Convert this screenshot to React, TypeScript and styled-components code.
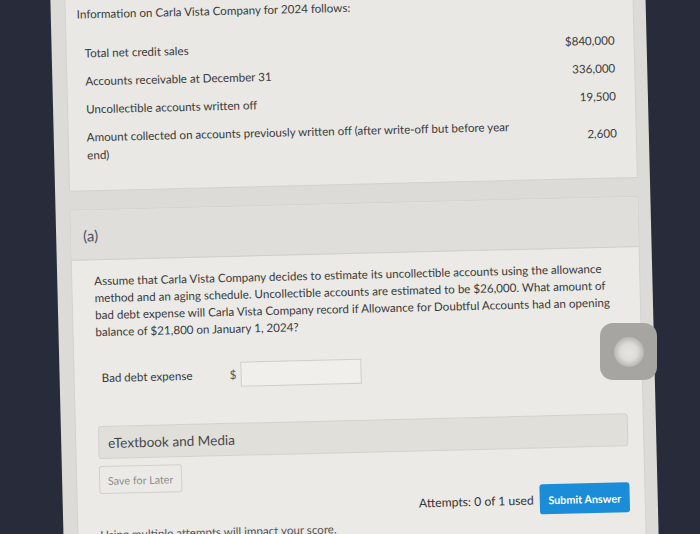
import React from "react";
import styled, { createGlobalStyle } from "styled-components";

const GlobalStyle = createGlobalStyle`
  html, body {
    margin: 0;
    padding: 0;
    background: #282b39;
    overflow: hidden;
  }
  body {
    font-family: Lato, "Open Sans", "Liberation Sans", sans-serif;
    color: #3a3a3a;
  }
`;

const Viewport = styled.div`
  width: 700px;
  height: 534px;
  overflow: hidden;
  position: relative;
  background: #282b39;
`;

const Tilt = styled.div`
  width: 700px;
  height: 534px;
  box-sizing: border-box;
  display: flex;
  padding: 0 48px 0 57px;
  transform: rotate(-1.4deg);
  transform-origin: 350px 267px;
`;

const Screen = styled.main`
  flex: 1;
  margin: -30px 0 -70px;
  padding: 18px 12px 0 14px;
  background: #dcdbd7;
  display: flex;
  flex-direction: column;
  box-sizing: border-box;
`;

const InfoCard = styled.section`
  background: #e9e8e4;
  border: 1px solid #d4d2ce;
  border-radius: 2px;
  padding: 10px 19px 26px 11px;
`;

const Heading = styled.p`
  margin: 0;
  font-size: 11.6px;
  line-height: 18px;
`;

const Table = styled.div`
  margin: 21px 0 0 7px;
  display: flex;
  flex-direction: column;
  gap: 10px;
`;

const Row = styled.div`
  display: grid;
  grid-template-columns: 1fr auto;
  align-items: center;
  font-size: 11.6px;
  line-height: 18px;
`;

const Value = styled.span`
  text-align: right;
`;

const PartCard = styled.section`
  margin-top: 18px;
  border: 1px solid #d4d2ce;
  border-radius: 2px;
  background: #ebeae6;
  flex: 1;
`;

const PartHeader = styled.header`
  height: 49px;
  display: flex;
  align-items: center;
  padding: 0 12px;
  background: #dfdeda;
  border-bottom: 1px solid #d1cfcb;
  font-size: 15px;
  color: #4d5364;
`;

const PartBody = styled.div`
  padding: 12px 15px 0 22px;
  display: flex;
  flex-direction: column;
`;

const Question = styled.p`
  margin: 0;
  font-size: 11.6px;
  line-height: 17px;
  white-space: nowrap;
`;

const AnswerRow = styled.div`
  margin: 25px 0 0 5px;
  display: flex;
  align-items: center;
  font-size: 11.6px;
`;

const AnswerLabel = styled.span`
  width: 128px;
`;

const Currency = styled.span`
  width: 11px;
  color: #555;
`;

const AmountInput = styled.div`
  width: 119px;
  height: 23px;
  border: 1px solid #cfcdc8;
  background: #f0efeb;
`;

const MediaBar = styled.div`
  margin-top: 36px;
  height: 31px;
  display: flex;
  align-items: center;
  padding: 0 9px;
  background: #e0dfda;
  border: 1px solid #d4d2cd;
  border-radius: 4px;
  font-size: 13.6px;
  color: #474747;
`;

const SaveButton = styled.div`
  margin-top: 7px;
  align-self: flex-start;
  width: 81px;
  height: 26px;
  display: flex;
  align-items: center;
  justify-content: center;
  border: 1px solid #d2d0cb;
  border-radius: 3px;
  background: #eceae6;
  font-size: 10.8px;
  color: #8e8e8e;
`;

const Footer = styled.div`
  margin-top: 1px;
  display: flex;
  justify-content: flex-end;
  align-items: center;
  gap: 6px;
`;

const Attempts = styled.span`
  font-size: 12.2px;
  color: #333;
`;

const SubmitButton = styled.div`
  width: 90px;
  height: 30px;
  display: flex;
  align-items: center;
  justify-content: center;
  border-radius: 3px;
  background: #1a8cd8;
  color: #fff;
  font-size: 10.8px;
  font-weight: 700;
`;

const Note = styled.p`
  margin: 4px 0 0;
  font-size: 11.6px;
  line-height: 12px;
  color: #555;
`;

const AssistiveTouch = styled.div`
  position: absolute;
  left: 600px;
  top: 323px;
  width: 57px;
  height: 57px;
  border-radius: 13px;
  background: #a6a5a1;
  display: flex;
  align-items: center;
  justify-content: center;
`;

const TouchDot = styled.div`
  width: 30px;
  height: 30px;
  border-radius: 50%;
  background: radial-gradient(circle, #e6e5e2 0%, #dcdbd7 40%, rgba(200, 199, 195, 0.55) 70%, rgba(166, 165, 161, 0) 100%);
`;

const rows: { label: React.ReactNode; value: string }[] = [
  { label: "Total net credit sales", value: "$840,000" },
  { label: "Accounts receivable at December 31", value: "336,000" },
  { label: "Uncollectible accounts written off", value: "19,500" },
  {
    label: (
      <>
        Amount collected on accounts previously written off (after write-off but before year
        <br />
        end)
      </>
    ),
    value: "2,600",
  },
];

export default function App() {
  return (
    <Viewport>
      <GlobalStyle />
      <Tilt>
        <Screen>
          <InfoCard>
            <Heading>Information on Carla Vista Company for 2024 follows:</Heading>
            <Table>
              {rows.map((r, i) => (
                <Row key={i}>
                  <span>{r.label}</span>
                  <Value>{r.value}</Value>
                </Row>
              ))}
            </Table>
          </InfoCard>
          <PartCard>
            <PartHeader>(a)</PartHeader>
            <PartBody>
              <Question>
                Assume that Carla Vista Company decides to estimate its uncollectible accounts using the allowance
                <br />
                method and an aging schedule. Uncollectible accounts are estimated to be $26,000. What amount of
                <br />
                bad debt expense will Carla Vista Company record if Allowance for Doubtful Accounts had an opening
                <br />
                balance of $21,800 on January 1, 2024?
              </Question>
              <AnswerRow>
                <AnswerLabel>Bad debt expense</AnswerLabel>
                <Currency>$</Currency>
                <AmountInput />
              </AnswerRow>
              <MediaBar>eTextbook and Media</MediaBar>
              <SaveButton>Save for Later</SaveButton>
              <Footer>
                <Attempts>Attempts: 0 of 1 used</Attempts>
                <SubmitButton>Submit Answer</SubmitButton>
              </Footer>
              <Note>Using multiple attempts will impact your score.</Note>
            </PartBody>
          </PartCard>
        </Screen>
      </Tilt>
      <AssistiveTouch>
        <TouchDot />
      </AssistiveTouch>
    </Viewport>
  );
}
